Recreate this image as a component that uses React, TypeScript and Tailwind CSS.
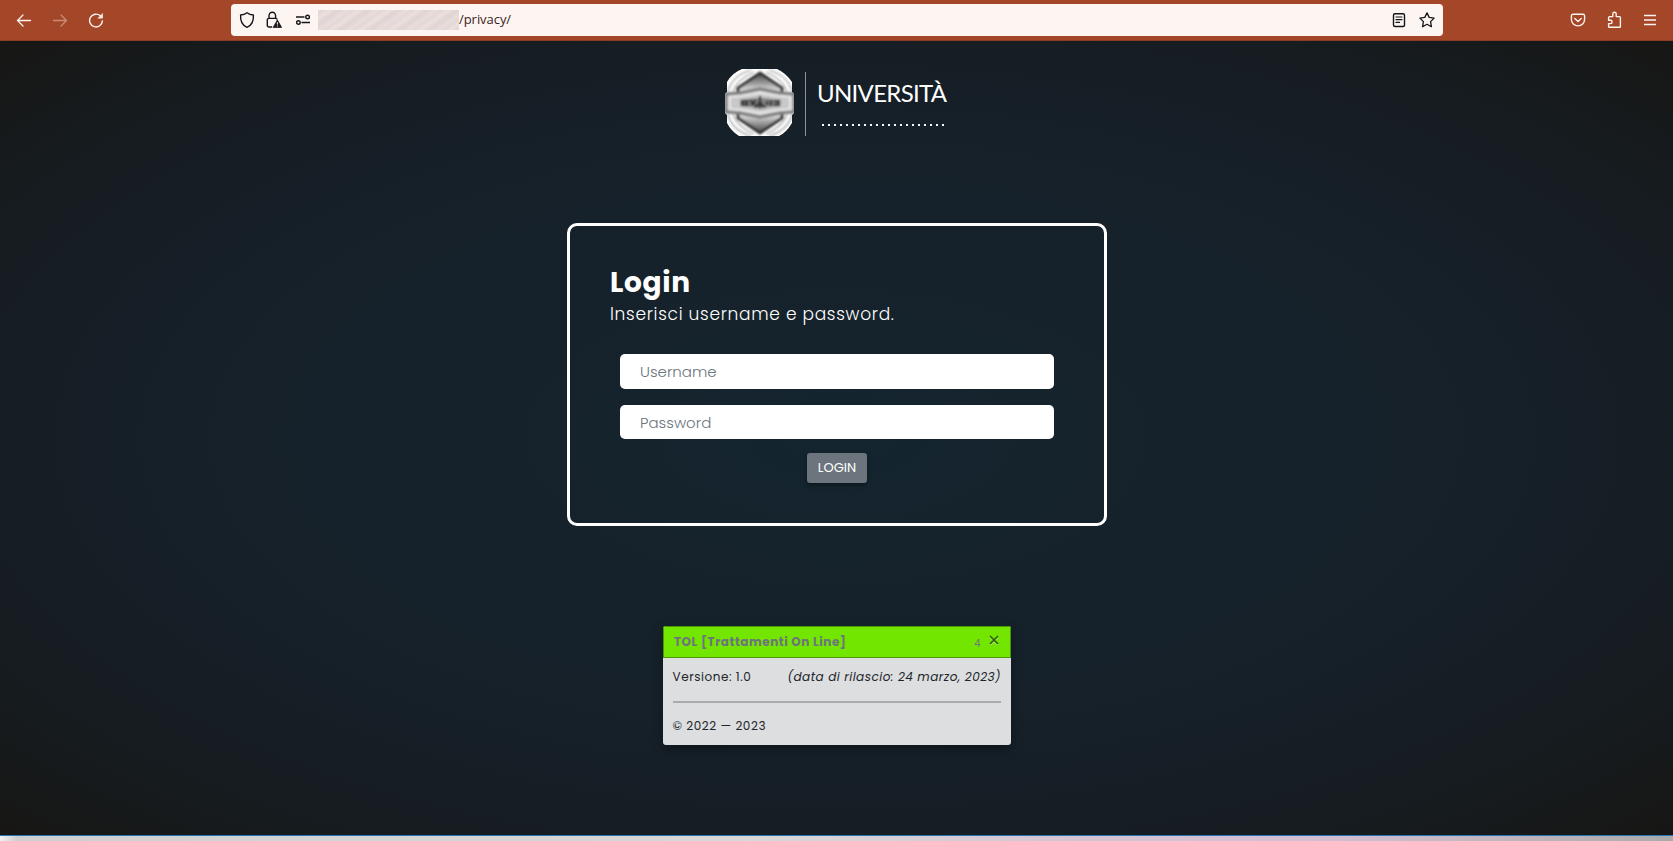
import React from "react";

function Emblem() {
  return (
    <svg className="h-[68px] w-[70px] shrink-0" viewBox="0 0 70 68">
      <defs>
        <clipPath id="badge">
          <path d="M17 0H52Q61 4 67 13V23L69 25V44L67 46V54Q61 64 54 67H14Q6 62 2 54V46L0 44V25L2 23V13Q7 4 17 0Z" />
        </clipPath>
        <linearGradient id="up" x1="0" y1="0" x2="0" y2="1">
          <stop offset="0" stopColor="#444" />
          <stop offset=".5" stopColor="#999" />
          <stop offset="1" stopColor="#f4f4f4" />
        </linearGradient>
        <linearGradient id="down" x1="0" y1="1" x2="0" y2="0">
          <stop offset="0" stopColor="#444" />
          <stop offset=".5" stopColor="#999" />
          <stop offset="1" stopColor="#f4f4f4" />
        </linearGradient>
        <filter id="soft"><feGaussianBlur stdDeviation=".8" /></filter>
      </defs>
      <g clipPath="url(#badge)">
        <rect width="70" height="68" fill="#fff" />
        <g filter="url(#soft)">
          <g fill="none" stroke="#9a9a9a" strokeWidth="1.2">
            <path d="M3 22Q8 6 26 1M8 22Q13 10 29 3M67 22Q62 6 44 1M62 22Q57 10 41 3M3 46Q8 62 26 67M8 46Q13 58 29 65M67 46Q62 62 44 67M62 46Q57 58 41 65" />
          </g>
          <path d="M35 4L57 19V24L35 20L13 24V19Z" fill="url(#up)" />
          <path d="M35 64L57 49V44L35 48L13 44V49Z" fill="url(#down)" />
          <path d="M13 23V19L35 4L57 19V23M13 45V49L35 64L57 49V45" fill="none" stroke="#2f2f2f" strokeWidth="3" />
          <path d="M1 25L15 24L35 20L55 24L69 25V43L55 44L35 48L15 44L1 43Z" fill="#dcdcdc" stroke="#808080" strokeWidth="3.4" />
          <path d="M5 28L17 27L35 24L53 27L65 28V40L53 41L35 44L17 41L5 40Z" fill="#c8c8c8" stroke="#ececec" strokeWidth="1.5" />
          <ellipse cx="35" cy="34" rx="20" ry="5" fill="#858585" />
          <path d="M17 32H22V36H17ZM25 31L30 36M31 31L26 36M35 27V40M30 39L35 33L40 39M42 32V36M46 31V37M49 32H54V36H49" fill="none" stroke="#303030" strokeWidth="2.4" />
        </g>
      </g>
    </svg>
  );
}

const iconBase = "shrink-0 fill-none stroke-current";

function BrowserBar() {
  return (
    <header className="flex h-[41px] shrink-0 items-center border-b border-[#8c3c22] bg-[#a44628] text-[#fdf4f0]">
      <div className="flex w-[231px] items-center gap-5 pl-4">
        <svg className={iconBase} width="16" height="16" viewBox="0 0 16 16" strokeWidth="1.3" strokeLinecap="round" strokeLinejoin="round"><path d="M1.5 8.5H14.5M7 3L1.5 8.5L7 14" /></svg>
        <svg className={iconBase + " opacity-40"} width="16" height="16" viewBox="0 0 16 16" strokeWidth="1.3" strokeLinecap="round" strokeLinejoin="round"><path d="M1.5 8.5H14.5M9 3L14.5 8.5L9 14" /></svg>
        <svg className={iconBase} width="16" height="16" viewBox="0 0 16 16" strokeWidth="1.4" strokeLinecap="round" strokeLinejoin="round"><path d="M14.4 8.9A6.4 6.4 0 1 1 12.3 3.8" /><path d="M14.6 1.6V6.2H10Z" fill="currentColor" strokeWidth=".4" /></svg>
      </div>
      <div className="flex h-8 w-[1212px] items-center rounded bg-[#fdf5f2] pr-2 pl-2 text-[#15141a]">
        <svg className={iconBase} width="16" height="18" viewBox="0 0 16 18" strokeWidth="1.4" strokeLinejoin="round"><path d="M8 1.7C6.3 3 4 3.8 1.6 4C1.2 9.5 3 14.2 8 16.4C13 14.2 14.8 9.5 14.4 4C12 3.8 9.7 3 8 1.7Z" /></svg>
        <svg className={iconBase + " ml-[11px]"} width="16" height="18" viewBox="0 0 16 18" strokeWidth="1.4" strokeLinejoin="round"><path d="M6.2 16H3A1.6 1.6 0 0 1 1.3 14.4V9A1.6 1.6 0 0 1 3 7.4H9.6Q11 7.4 11.2 8.6M3 7.2V4.8A3.3 3.6 0 0 1 9.6 4.8V7.2" /><path d="M11.4 9L15.6 16.4H7.2Z" fill="currentColor" strokeWidth=".8" /><path d="M11.4 11.2V13.6M11.4 14.5V15.6" stroke="#fdf5f2" strokeWidth="1" /></svg>
        <svg className={iconBase + " ml-[13px]"} width="16" height="16" viewBox="0 0 16 16" strokeWidth="1.4"><path d="M1 5H9.5M6.5 10.5H15" /><circle cx="12.6" cy="5" r="1.8" /><circle cx="3.4" cy="10.5" r="1.8" /></svg>
        <div className="ml-[7px] h-[20px] w-[141px] bg-[repeating-linear-gradient(145deg,#e9dddb_0px,#e2d8d7_3px,#ecdfdc_7px,#dfd4d3_12px,#e9dddb_17px)]" />
        <span className="font-['Open_Sans',sans-serif] text-[13px] tracking-[-0.05px] text-[#3a1d24]">/privacy/</span>
        <svg className={iconBase + " ml-auto"} width="16" height="16" viewBox="0 0 16 16" strokeWidth="1.4" strokeLinecap="round"><rect x="2.5" y="1.7" width="11" height="12.8" rx="1.5" /><path d="M5 5H11M5 7.7H11M5 10.4H8.5" strokeWidth="1.2" /></svg>
        <svg className={iconBase + " ml-3"} width="16" height="16" viewBox="0 0 16 16" strokeWidth="1.3" strokeLinejoin="round"><path d="M8 .9L10.2 5.4L15.1 6.1L11.6 9.6L12.4 14.7L8 12.3L3.6 14.7L4.4 9.6L.9 6.1L5.8 5.4Z" /></svg>
      </div>
      <div className="flex flex-1 items-center justify-end gap-5 pr-[15px]">
        <svg className={iconBase} width="16" height="16" viewBox="0 0 16 16" strokeWidth="1.4" strokeLinecap="round" strokeLinejoin="round"><path d="M3 2.2H13A1.7 1.7 0 0 1 14.6 4V7.5A6.6 6.4 0 0 1 1.4 7.5V4A1.7 1.7 0 0 1 3 2.2ZM4.8 6.4L8 9.4L11.2 6.4" /></svg>
        <svg className={iconBase} width="16" height="18" viewBox="0 0 16 18" strokeWidth="1.4" strokeLinejoin="round"><path d="M3.4 5.6H6.8V3A1.7 1.7 0 0 1 10.2 3V5.6H13.6Q14.4 5.6 14.4 6.4V15.4Q14.4 16.2 13.6 16.2H3.4Q2.6 16.2 2.6 15.4V12.6H4.4A1.7 1.7 0 0 0 4.4 9.2H2.6V6.4Q2.6 5.6 3.4 5.6Z" /></svg>
        <svg className={iconBase} width="16" height="16" viewBox="0 0 16 16" strokeWidth="1.3"><path d="M2 3.5H14M2 8H14M2 12.5H14" /></svg>
      </div>
    </header>
  );
}

const inputClass = "block w-full rounded-[5px] bg-white pl-5 text-[15px] font-light placeholder:text-[#6c757d] placeholder:opacity-100 outline-none";

export default function App() {
  return (
    <div className="flex h-[841px] w-full flex-col overflow-hidden font-['Poppins','Inter',sans-serif]">
      <BrowserBar />
      <main className="flex h-[794px] flex-col items-center bg-[radial-gradient(ellipse_farthest-corner_at_center,#14252f_0%,#16222b_30%,#16212a_50%,#161e25_68%,#161b1e_84%,#171614_100%)] pt-7">
        <div className="flex h-[68px] w-[223px] items-start">
          <Emblem />
          <div className="mt-[3px] ml-[10px] h-16 w-px shrink-0 bg-[#8e959a]" />
          <div className="ml-[11px] pt-1">
            <div className="font-['Lato',sans-serif] text-[24px] leading-[40px] tracking-[-0.7px] whitespace-nowrap text-white">UNIVERSITÀ</div>
            <div className="mt-[11px] ml-[5px] flex gap-1">
              {Array.from({ length: 21 }, (_, i) => (
                <span key={i} className="size-[2px] shrink-0 bg-[#f4fbfb]" />
              ))}
            </div>
          </div>
        </div>

        <section className="mt-[86px] h-[303px] w-[540px] rounded-[10px] border-[3px] border-white pr-10 pl-[40.5px] pt-9 text-white">
          <h1 className="text-[28px] leading-[42px] font-bold tracking-[0.7px]">Login</h1>
          <p className="-mt-px text-[17px] leading-[22px] font-light tracking-[0.7px] whitespace-nowrap">Inserisci username e password.</p>
          <form className="mt-[29px] flex w-[454px] flex-col items-center px-[10px]">
            <input className={inputClass + " h-[35px]"} placeholder="Username" />
            <input className={inputClass + " mt-4 h-[34px]"} placeholder="Password" />
            <button type="button" className="mt-[14px] h-[30px] w-[60px] rounded-[3px] bg-[#6c757d] text-[13px] tracking-[0.05px] shadow-[0_2px_4px_rgba(0,0,0,0.4)]">LOGIN</button>
          </form>
        </section>

        <footer className="mt-[100px] h-[119px] w-[348px] overflow-hidden rounded-[3px] bg-[#dcdee0] text-[12px] text-[#212529] shadow-[0_4px_12px_rgba(0,0,0,0.35)]">
          <div className="flex h-8 items-center border border-[#4b9606] bg-[#73e600] pl-[10.5px] text-[#6c757d]">
            <strong className="font-bold tracking-[0.53px] whitespace-nowrap">TOL [Trattamenti On Line]</strong>
            <span className="mr-[8px] ml-auto pt-[2px] text-[10px]">4</span>
            <svg className="mr-[11px] mb-1" width="10" height="10" viewBox="0 0 10 10" fill="none" strokeWidth="1.7"><path d="M1 2L9 10M9 2L1 10" stroke="#b4f078" /><path d="M1 1L9 9M9 1L1 9" stroke="#2e5c08" /></svg>
          </div>
          <div className="px-[10px]">
            <div className="flex justify-between pt-[10px] leading-[18px] whitespace-nowrap">
              <span className="tracking-[0.55px]">Versione: 1.0</span>
              <em className="-mr-[0.5px] tracking-[0.48px]">(data di rilascio: 24 marzo, 2023)</em>
            </div>
            <div className="mt-[15px] h-[2px] bg-[#a9abad]" />
            <p className="mt-[14px] leading-[18px] tracking-[0.55px]">© 2022 — 2023</p>
          </div>
        </footer>
      </main>
      <div className="h-px bg-[#2774b5]" />
      <div className="h-[5px] bg-[linear-gradient(90deg,#f2f2f2_0%,#cfcfcf_1%,#d8d8d8_45%,#d5c3d2_65%,#d4bfd2_78%,#bdb3bb_92%,#aaa_100%)]" />
    </div>
  );
}
